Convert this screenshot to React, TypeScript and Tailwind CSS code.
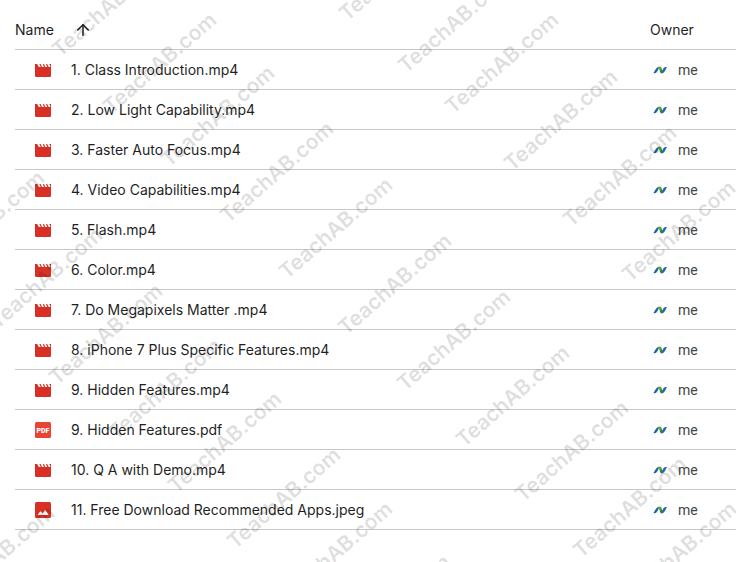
import { ArrowUp } from 'lucide-react'

type FileKind = 'video' | 'pdf' | 'image'

interface DriveFile {
  name: string
  kind: FileKind
}

const files: DriveFile[] = [
  { name: '1. Class Introduction.mp4', kind: 'video' },
  { name: '2. Low Light Capability.mp4', kind: 'video' },
  { name: '3. Faster Auto Focus.mp4', kind: 'video' },
  { name: '4. Video Capabilities.mp4', kind: 'video' },
  { name: '5. Flash.mp4', kind: 'video' },
  { name: '6. Color.mp4', kind: 'video' },
  { name: '7. Do Megapixels Matter .mp4', kind: 'video' },
  { name: '8. iPhone 7 Plus Specific Features.mp4', kind: 'video' },
  { name: '9. Hidden Features.mp4', kind: 'video' },
  { name: '9. Hidden Features.pdf', kind: 'pdf' },
  { name: '10. Q A with Demo.mp4', kind: 'video' },
  { name: '11. Free Download Recommended Apps.jpeg', kind: 'image' },
]

// Where the last letter of each stamp ends
const stamps = [
  [167, -35], [218, 22], [276, 75], [335, 131], [394, 187], [453, 243], [512, 299], [571, 355], [630, 410], [688, 466], [738, 511],
  [454, -71], [513, -19], [560, 22], [619, 79], [678, 135], [737, 190],
  [46, 180], [104, 237], [164, 293], [223, 348], [283, 401], [342, 457], [394, 511], [452, 564],
  [56, 515],
]

function FileIcon({ kind }: { kind: FileKind }) {
  if (kind === 'pdf') {
    return (
      <svg width="16" height="16" viewBox="0 0 16 16" aria-hidden="true">
        <rect width="16" height="16" rx="1.5" fill="#ea4335" />
        <text x="8" y="10.5" textAnchor="middle" fontFamily="Roboto, sans-serif" fontWeight="900" fontSize="7" fill="#fff">
          PDF
        </text>
      </svg>
    )
  }
  if (kind === 'image') {
    return (
      <svg width="16" height="16" viewBox="0 0 16 16" aria-hidden="true">
        <rect width="16" height="16" rx="1.5" fill="#d93025" />
        <path d="M2.6 13 5.4 9.2l2.2 2.4 2.6-3.800 3.400 5.200z" fill="#fff" />
      </svg>
    )
  }
  return (
    <svg width="16" height="16" viewBox="0 0 16 16" aria-hidden="true">
      <path
        d="M0 2h2.200l1.600 2.900h1.900L4.400 2h1.200l1.500 2.900H9L7.700 2h1.200l1.500 2.900h1.900L11 2h1.200l1.500 2.900h1.800L14.300 2H16v11.800a1.200 1.200 0 0 1-1.200 1.200H1.200A1.200 1.200 0 0 1 0 13.800z"
        fill="#d93025"
      />
    </svg>
  )
}

function OwnerAvatar() {
  return (
    <svg width="20" height="20" viewBox="0 0 20 20" aria-hidden="true">
      <circle cx="10" cy="10" r="9.5" fill="#fff" stroke="#f5f5f5" />
      <path d="M3.300 13.200 6 8.700Q7 7 8.600 7h.9L7.300 11.300Q6.300 13.200 4.800 13.200z" fill="#1b62a8" />
      <path d="M11 13.200 13.300 8.500Q14.100 7 15.500 7H17l-2.400 4.500q-.9 1.700-2.400 1.700z" fill="#1769b4" />
      <path d="M7.800 7.200Q8.600 6.600 9.700 6.600q1.400 0 1.900 1.500l1.500 4.700q-.6.400-1.300.4-1.200 0-1.700-1.500L8.900 8.400z" fill="#5f9e35" />
      <path d="M9.900 11.200 11.900 9.400l1.200 3.400q-.6.400-1.300.4-1.300 0-1.900-2z" fill="#2f7a3c" />
    </svg>
  )
}

function Watermark() {
  return (
    <svg className="absolute inset-0 w-full h-full overflow-hidden pointer-events-none" aria-hidden="true">
      <g fontFamily="Inter, sans-serif" fontSize="21" fontWeight="600" fill="#000" fillOpacity="0.14" textAnchor="end">
        {stamps.map(([x, y]) => (
          <text key={`${x},${y}`} transform={`translate(${x} ${y}) rotate(-41)`}>
            TeachAB.com
          </text>
        ))}
      </g>
    </svg>
  )
}

export default function App() {
  return (
    <div className="relative min-h-screen overflow-hidden bg-white text-[#1f1f1f] font-['Inter',sans-serif]">
      <main className="pl-[15px] pt-[10px]">
        <table className="w-full table-fixed border-separate border-spacing-0 text-left text-sm">
          <thead>
            <tr className="h-10">
              <th scope="col" className="border-b border-[#c7c7c7] p-0 font-normal">
                <button className="flex items-center gap-5">
                  Name
                  <ArrowUp size={18} strokeWidth={2} />
                </button>
              </th>
              <th scope="col" className="w-[86px] border-b border-[#c7c7c7] p-0 font-normal">Owner</th>
            </tr>
          </thead>
          <tbody>
            {files.map((file) => (
              <tr key={file.name} className="h-10">
                <td className="border-b border-[#c7c7c7] p-0 pl-5">
                  <div className="flex items-center gap-5">
                    <FileIcon kind={file.kind} />
                    <span className="truncate">{file.name}</span>
                  </div>
                </td>
                <td className="border-b border-[#c7c7c7] p-0">
                  <div className="flex items-center gap-2 font-['Roboto',sans-serif] text-[#444746]">
                    <OwnerAvatar />
                    me
                  </div>
                </td>
              </tr>
            ))}
          </tbody>
        </table>
      </main>
      <Watermark />
    </div>
  )
}
